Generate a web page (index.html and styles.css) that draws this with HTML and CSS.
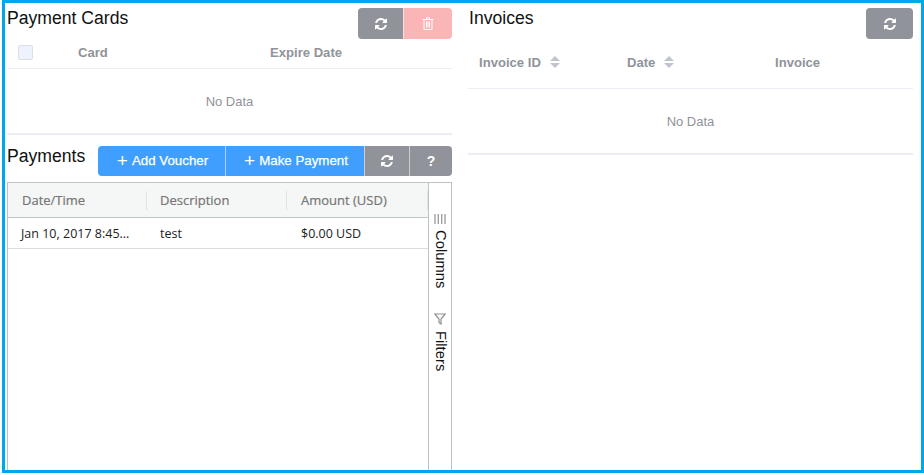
FILE: index.html
```html
<!DOCTYPE html>
<html lang="en">
<head>
<meta charset="utf-8">
<title>Payments</title>
<link rel="stylesheet" href="styles.css">
</head>
<body>
<svg class="defs" width="0" height="0" aria-hidden="true">
  <symbol id="refresh" viewBox="0 0 1536 1536">
    <path fill="currentColor" d="M1511 928q0 5-1 7-64 268-268 434.500t-478 166.500q-146 0-282.500-55t-243.500-157l-129 129q-19 19-45 19t-45-19-19-45v-448q0-26 19-45t45-19h448q26 0 45 19t19 45-19 45l-137 137q71 66 161 102t187 36q134 0 250-65t186-179q11-17 53-117 8-23 30-23h192q13 0 22.500 9.500t9.500 22.500zm25-800v448q0 26-19 45t-45 19h-448q-26 0-45-19t-19-45 19-45l138-138q-148-137-349-137-134 0-250 65t-186 179q-11 17-53 117-8 23-30 23h-199q-13 0-22.500-9.500t-9.500-22.500v-7q65-268 270-434.500t480-166.500q146 0 284 55.500t245 156.500l130-129q19-19 45-19t45 19 19 45z"/>
  </symbol>
</svg>
<div class="frame">
  <div class="col">
    <section class="cards">
      <div class="head">
        <h2 class="title">Payment Cards</h2>
        <div class="btns">
          <button class="btn gray w45"><svg class="ico"><use href="#refresh"/></svg></button>
          <button class="btn pink w48"><svg class="trash" viewBox="0 0 12 13"><path fill="none" stroke="currentColor" d="M.5 2.500h11M2 2.500v10h8v-10M4.500 2.500V.7h3v1.800"/><path stroke="currentColor" d="M4.500 4.500v6M6 4.500v6M7.500 4.500v6"/></svg></button>
        </div>
      </div>
      <div class="thead-cards">
        <span class="check"></span>
        <span class="th c-card">Card</span>
        <span class="th">Expire Date</span>
      </div>
      <div class="nodata">No Data</div>
    </section>

    <section class="payments">
      <div class="head2">
        <h2 class="title">Payments</h2>
        <div class="btns">
          <button class="btn blue w127"><span class="plus">+</span>Add Voucher</button>
          <button class="btn blue w139"><span class="plus">+</span>Make Payment</button>
          <button class="btn gray w45"><svg class="ico"><use href="#refresh"/></svg></button>
          <button class="btn gray w43 q">?</button>
        </div>
      </div>
      <div class="grid">
        <div class="grid-main">
          <div class="grid-head">
            <div class="gh g1">Date/Time</div>
            <div class="gh g2">Description</div>
            <div class="gh g3">Amount (USD)</div>
          </div>
          <div class="grid-row">
            <div class="gc g1">Jan 10, 2017 8:45...</div>
            <div class="gc g2">test</div>
            <div class="gc g3">$0.00 USD</div>
          </div>
        </div>
        <div class="side">
          <div class="side-tab">
            <svg class="side-ico" viewBox="0 0 12 10"><path stroke="#9a9a9a" stroke-width="1.300" d="M1 0v10M4.300 0v10M7.700 0v10M11 0v10"/></svg>
            <span class="side-label">Columns</span>
          </div>
          <div class="side-tab second">
            <svg class="side-ico filter" viewBox="0 0 12 12"><path fill="none" stroke="#8f8f8f" stroke-width="1.200" d="M.8 1h10.400L7 6v5L5 9.500V6z"/></svg>
            <span class="side-label">Filters</span>
          </div>
        </div>
      </div>
    </section>
  </div>

  <div class="col">
    <section>
      <div class="head">
        <h2 class="title inv">Invoices</h2>
        <div class="btns">
          <button class="btn gray w47"><svg class="ico"><use href="#refresh"/></svg></button>
        </div>
      </div>
      <div class="thead-inv">
        <span class="th i1">Invoice ID<span class="sort"><i class="up"></i><i class="down"></i></span></span>
        <span class="th i2">Date<span class="sort"><i class="up"></i><i class="down"></i></span></span>
        <span class="th">Invoice</span>
      </div>
      <div class="nodata">No Data</div>
    </section>
  </div>
</div>
</body>
</html>
```
FILE: styles.css
```css
* { box-sizing: border-box; }
html, body { margin: 0; padding: 0; background: #fff; }
body { height: 475px; overflow: hidden; font-family: "Liberation Sans", Arial, sans-serif; }
.defs { display: block; height: 0; }
.frame {
  margin-left: 2px;
  width: 922px;
  height: 473px;
  border: 3px solid #00a7ec;
  padding: 5px 8px 0 2px;
  display: flex;
  gap: 16px;
}
.col { width: 445px; flex: none; display: flex; flex-direction: column; }
.head { display: flex; justify-content: space-between; height: 31px; }
.head2 { display: flex; justify-content: space-between; height: 30px; }
.title { margin: 0; font-weight: 400; font-size: 17.6px; line-height: 20px; color: #111; }
.inv { padding-left: 1px; }
.btns { display: flex; }
.btn {
  height: 31px;
  border: 0;
  padding: 0;
  color: #fff;
  font: 700 13px/1 "Liberation Sans", sans-serif;
  display: flex;
  align-items: center;
  justify-content: center;
}
.head2 .btn { height: 30px; }
.btns .btn:first-child { border-radius: 4px 0 0 4px; }
.btns .btn:last-child { border-radius: 0 4px 4px 0; }
.btns .btn:only-child { border-radius: 4px; }
.btn + .btn { border-left: 1px solid rgba(255,255,255,.55); }
.gray { background: #909399; }
.pink { background: #fab6b6; }
.blue { background: #409eff; font-weight: 400; font-size: 13.3px; -webkit-text-stroke: .25px #fff; padding-left: 2px; }
.w45 { width: 45px; }
.w47 { width: 47px; }
.w48 { width: 49px; }
.w127 { width: 127px; }
.w139 { width: 139px; }
.w43 { width: 43px; }
.q { font-size: 14px; }
.plus { font-size: 19px; font-weight: 400; margin-right: 4px; line-height: 14px; -webkit-text-stroke: 0; }
.ico { width: 12px; height: 12px; display: block; }
.trash { width: 12px; height: 13px; display: block; }
.th { font-weight: 700; font-size: 13.1px; color: #909399; }
.thead-cards {
  height: 30px;
  display: flex;
  align-items: center;
  border-bottom: 1px solid #ebeef5;
  padding: 0 0 3px 11px;
}
.check {
  width: 15px;
  height: 15px;
  border: 1px solid #dcdfe6;
  border-radius: 2px;
  background: #edf2fc;
  margin-right: 45px;
}
.c-card { width: 192px; }
.nodata {
  height: 66px;
  padding-top: 1px;
  display: flex;
  align-items: center;
  justify-content: center;
  border-bottom: 2px solid #ebeef5;
  font-size: 13px;
  color: #909399;
}
.payments { margin-top: 11px; flex: 1; display: flex; flex-direction: column; }
.grid {
  margin-top: 6px;
  flex: 1;
  display: flex;
  border: 1px solid #bdc3c7;
  border-bottom: 0;
  font-family: "Open Sans", "Noto Sans", sans-serif;
  font-size: 12.5px;
}
.grid-main { flex: 1; min-width: 0; }
.grid-head {
  height: 35px;
  display: flex;
  align-items: center;
  background: #f5f7f7;
  border-bottom: 1px solid #bdc3c7;
  color: #757575;
  font-size: 13px;
  -webkit-text-stroke: .2px #757575;
}
.gh { height: 19px; line-height: 19px; padding-left: 14px; border-right: 1px solid #dfe3e5; }
.gh.g2 { padding-left: 13px; }
.g1 { width: 139px; }
.g2 { width: 140px; }
.g3 { width: 141px; }
.grid-row {
  height: 31px;
  display: flex;
  align-items: center;
  border-bottom: 1px solid #d9dcde;
  color: #222;
}
.gc { padding-left: 13px; white-space: nowrap; }
.gc.g2 { padding-left: 13px; }
.gc.g3 { padding-left: 14px; }
.side { width: 23px; flex: none; border-left: 1px solid #bdc3c7; padding-top: 31px; }
.side-tab { display: flex; flex-direction: column; align-items: center; }
.second { margin-top: 25px; }
.side-ico { width: 12px; height: 10px; display: block; }
.filter { height: 12px; }
.side-label {
  writing-mode: vertical-rl;
  margin-top: 6px;
  padding-left: 1px;
  font: 14.8px/16px "Liberation Sans", sans-serif;
  color: #111;
}
.thead-inv {
  height: 50px;
  display: flex;
  align-items: center;
  padding: 0 0 3px 11px;
  border-bottom: 1px solid #ebeef5;
}
.i1, .i2 { width: 148px; display: flex; align-items: center; }
.sort { display: inline-flex; flex-direction: column; gap: 2px; margin-left: 9px; }
.up, .down { display: block; width: 0; height: 0; border-left: 5.500px solid transparent; border-right: 5.500px solid transparent; }
.up { border-bottom: 5px solid #c0c4cc; }
.down { border-top: 5px solid #c0c4cc; }
```
